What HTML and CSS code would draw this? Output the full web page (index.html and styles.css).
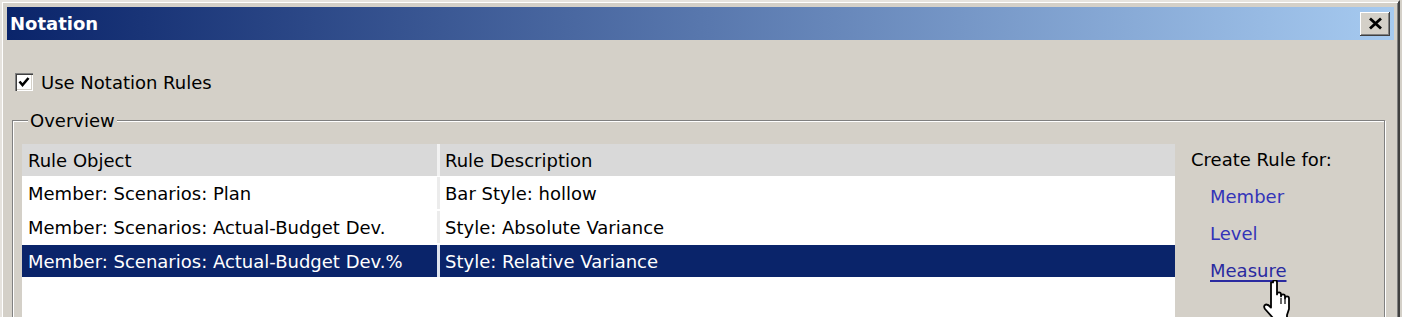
FILE: index.html
```html
<!DOCTYPE html>
<html lang="en">
<head>
  <meta charset="UTF-8">
  <title>Notation</title>
  <link rel="stylesheet" href="styles.css">
</head>
<body>
  <div class="window">
    <div class="titlebar">
      <span class="title">Notation</span>
      <button class="close" aria-label="Close">
        <svg width="15" height="13" viewBox="0 0 15 13">
          <path d="M2 1.5 L13 11.5 M13 1.5 L2 11.5" stroke="#000" stroke-width="2.8" fill="none"/>
        </svg>
      </button>
    </div>

    <label class="option">
      <span class="check">
        <svg width="14" height="14" viewBox="0 0 14 14">
          <path d="M2.5 6.5 L5.5 10 L11.5 3" stroke="#000" stroke-width="2.6" fill="none"/>
        </svg>
      </span>
      Use Notation Rules
    </label>

    <fieldset class="group">
      <legend>Overview</legend>
      <div class="group-inner">
        <div class="list">
          <div class="row head">
            <div class="cell">Rule Object</div>
            <div class="cell">Rule Description</div>
          </div>
          <div class="row">
            <div class="cell">Member: Scenarios: Plan</div>
            <div class="cell">Bar Style: hollow</div>
          </div>
          <div class="row">
            <div class="cell">Member: Scenarios: Actual-Budget Dev.</div>
            <div class="cell">Style: Absolute Variance</div>
          </div>
          <div class="row selected">
            <div class="cell">Member: Scenarios: Actual-Budget Dev.%</div>
            <div class="cell">Style: Relative Variance</div>
          </div>
        </div>

        <div class="side">
          <div class="side-title">Create Rule for:</div>
          <a class="link" href="#">Member</a>
          <a class="link" href="#">Level</a>
          <a class="link hover" href="#">Measure
            <svg class="cursor" width="34" height="44" viewBox="0 0 17 22">
              <path d="M5 1.2 Q5 0 6 0 Q7 0 7 1.2 V7.2 Q7 6.2 8 6.2 Q9 6.2 9 7.2 V8.2 Q9 7.2 10 7.2 Q11 7.2 11 8.2 V9.2 Q11 8.2 12 8.2 Q13 8.2 13 9.2 V14.5 L12 17.5 V21.5 H5 V19 L1 14.5 Q0 13 1.3 12.3 Q2.5 12 4 13.8 V1.2 Z" fill="#fff" stroke="#000" stroke-width="0.9" stroke-linejoin="round"/>
              <path d="M9 9 V12 M11 9.5 V12" stroke="#000" stroke-width="0.6"/>
            </svg>
          </a>
        </div>
      </div>
    </fieldset>
  </div>
</body>
</html>
```

FILE: styles.css
```css
body {
  margin: 0;
  background: #d4d0c8;
  font-family: "DejaVu Sans", sans-serif;
  font-size: 18px;
  color: #000;
  overflow: hidden;
}
/* dialog is cropped at the bottom of the shot, so no bottom edge */
.window {
  box-sizing: border-box;
  width: 1400px;
  height: 317px;
  border: 2px solid;
  border-bottom: 0;
  border-color: #e6e3de #404040 #404040 #e6e3de;
  box-shadow: inset 1px 1px #fff, inset -1px 0 #808080;
  padding: 5px 4px 0 5px;
  background: #d4d0c8;
  overflow: hidden;
}
.titlebar {
  height: 33px;
  display: flex;
  align-items: center;
  justify-content: space-between;
  padding: 0 4px 0 3px;
  background: linear-gradient(to right, #0a246a, #a6caf0);
}
.title {
  color: #fff;
  font-weight: bold;
  font-size: 18px;
}
.close {
  width: 30px;
  height: 24px;
  padding: 0;
  border: none;
  background: #d4d0c8;
  box-shadow: inset -1px -1px #404040, inset 1px 1px #fff, inset -2px -2px #808080;
  display: flex;
  align-items: center;
  justify-content: center;
}
.option {
  display: flex;
  align-items: center;
  gap: 8px;
  height: 20px;
  margin: 32px 0 0 8px;
}
.check {
  width: 18px;
  height: 18px;
  box-sizing: border-box;
  background: #fff;
  box-shadow: inset 1px 1px #808080, inset 2px 2px #404040, inset -1px -1px #fff, inset -2px -2px #d4d0c8;
  display: flex;
  align-items: center;
  justify-content: center;
}
.group {
  box-sizing: border-box;
  height: 207px;
  margin: 18px 9px 0 5px;
  padding: 13px 0 0 9px;
  border: 1px solid #808080;
  border-bottom: 0;
  box-shadow: inset 1px 1px #fff, 1px 1px #fff;
}
.group legend {
  margin-left: 6px;
  padding: 0 2px;
  background: #d4d0c8;
}
.group-inner {
  display: flex;
  height: 173px;
  overflow: hidden;
}
.list {
  width: 1153px;
  background: #fff;
}
.row {
  display: grid;
  grid-template-columns: 415px 1fr;
  column-gap: 3px;
  height: 32px;
  margin-bottom: 2px;
  background: #ececec;
}
.row .cell {
  background: #fff;
  display: flex;
  align-items: center;
  padding-left: 6px;
  white-space: nowrap;
}
.row .cell + .cell {
  padding-left: 5px;
}
.row.head {
  margin-bottom: 1px;
  background: #f2f2f2;
}
.row.head .cell {
  background: #d9d9d9;
}
.row.selected {
  background: #dfe4ee;
}
.row.selected .cell {
  background: #0a246a;
  color: #fff;
}
.side {
  display: flex;
  flex-direction: column;
  align-items: flex-start;
  padding: 5px 0 0 16px;
}
.side-title {
  line-height: 21px;
}
.link {
  position: relative;
  margin: 16px 0 0 19px;
  line-height: 21px;
  color: #3333b8;
  text-decoration: none;
}
.link.hover {
  color: #2a2aa0;
  text-decoration: underline;
  text-decoration-thickness: 2px;
  text-underline-offset: 3px;
}
.cursor {
  position: absolute;
  left: 53px;
  top: 20px;
}
```
